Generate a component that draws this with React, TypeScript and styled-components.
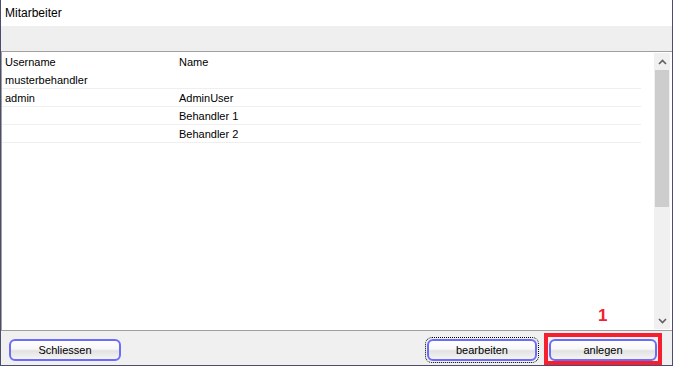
import React from "react";
import styled, { createGlobalStyle } from "styled-components";

const GlobalStyle = createGlobalStyle`
  html, body {
    margin: 0;
    padding: 0;
    background: #ffffff;
  }
  body {
    font-family: "Liberation Sans", Arial, sans-serif;
    font-size: 11px;
    color: #000;
  }
`;

const rows = [
  { user: "musterbehandler", name: "" },
  { user: "admin", name: "AdminUser" },
  { user: "", name: "Behandler 1" },
  { user: "", name: "Behandler 2" },
];

const App = () => {
  return (
    <>
      <GlobalStyle />
      <SWindow>
        <STitle>Mitarbeiter</STitle>
        <SBand />
        <SListArea>
          <STable>
            <SRow $header>
              <SCell>Username</SCell>
              <SCell>Name</SCell>
            </SRow>
            {rows.map((row, index) => (
              <SRow key={index}>
                <SCell>{row.user}</SCell>
                <SCell>{row.name}</SCell>
              </SRow>
            ))}
          </STable>
          <SScrollbar>
            <SArrow>
              <svg width="9" height="6" viewBox="0 0 9 6">
                <path d="M1 5 L4.5 1.5 L8 5" stroke="#606060" strokeWidth="1.6" fill="none" />
              </svg>
            </SArrow>
            <SThumb />
            <STrack />
            <SArrow>
              <svg width="9" height="6" viewBox="0 0 9 6">
                <path d="M1 1 L4.5 4.5 L8 1" stroke="#606060" strokeWidth="1.6" fill="none" />
              </svg>
            </SArrow>
          </SScrollbar>
        </SListArea>
        <SFooter>
          <SButton $width={112}>Schliessen</SButton>
          <SSpacer />
          <SFocus>
            <SButton $width={110}>bearbeiten</SButton>
          </SFocus>
          <SMarked>
            <SButton $width={108}>anlegen</SButton>
            <SStepNumber>1</SStepNumber>
          </SMarked>
        </SFooter>
      </SWindow>
    </>
  );
};

const SWindow = styled.div`
  display: flex;
  flex-direction: column;
  width: 673px;
  height: 366px;
  box-sizing: border-box;
  border-left: 1px solid #4c4c6e;
  border-right: 1px solid #4c4c6e;
  border-bottom: 1px solid #4c4c6e;
  background: #ffffff;
`;

const STitle = styled.div`
  height: 26px;
  display: flex;
  align-items: center;
  padding-left: 4px;
  font-size: 12px;
  background: #ffffff;
`;

const SBand = styled.div`
  height: 25px;
  background: #efefef;
  border-bottom: 1px solid #a0a0a0;
`;

const SListArea = styled.div`
  flex: 1;
  display: flex;
  border-left: 1px solid #a0a0a0;
  min-height: 0;
`;

const STable = styled.div`
  flex: 1;
  padding-top: 1px;
  padding-right: 13px;
`;

const SRow = styled.div<{ $header?: boolean }>`
  display: grid;
  grid-template-columns: 174px 1fr;
  height: ${(p) => (p.$header ? "18px" : "17px")};
  align-items: center;
  border-bottom: ${(p) => (p.$header ? "none" : "1px solid #efefef")};
`;

const SCell = styled.div`
  padding-left: 3px;
  white-space: nowrap;
`;

const SScrollbar = styled.div`
  width: 16px;
  margin: 1px 2px 1px 0;
  display: flex;
  flex-direction: column;
  background: #f0f0f0;
`;

const SArrow = styled.div`
  height: 17px;
  display: flex;
  align-items: center;
  justify-content: center;
  background: #f0f0f0;
`;

const SThumb = styled.div`
  height: 137px;
  margin: 0 1px 0 1px;
  background: #cdcdcd;
`;

const STrack = styled.div`
  flex: 1;
`;

const SFooter = styled.div`
  height: 35px;
  box-sizing: border-box;
  display: flex;
  align-items: flex-start;
  padding: 8px 15px 0 8px;
  background: #f0f0f0;
  border-top: 1px solid #a0a0a0;
`;

const SSpacer = styled.div`
  flex: 1;
`;

const SButton = styled.button<{ $width: number }>`
  width: ${(p) => p.$width}px;
  height: 22px;
  box-sizing: border-box;
  border: 2px solid #6c6cfa;
  border-radius: 6px;
  background: linear-gradient(to bottom, #ffffff 0%, #f7f7f7 45%, #e2e2e2 55%, #f4f4f4 100%);
  font-family: "Liberation Sans", Arial, sans-serif;
  font-size: 11px;
  color: #000;
  padding: 0;
  cursor: pointer;
`;

const SFocus = styled.div`
  outline: 1px dotted #000;
  outline-offset: 1px;
  border-radius: 5px;
  margin-right: 12px;
  display: flex;
`;

const SMarked = styled.div`
  position: relative;
  display: flex;

  &::after {
    content: "";
    position: absolute;
    left: -5px;
    right: -5px;
    top: -6px;
    bottom: -4px;
    border: 4px solid #f4202f;
    pointer-events: none;
  }
`;

const SStepNumber = styled.span`
  position: absolute;
  left: 49px;
  top: -33px;
  color: #f4202f;
  font-family: "Liberation Sans", Arial, sans-serif;
  font-weight: bold;
  font-size: 17px;
`;

export default App;
